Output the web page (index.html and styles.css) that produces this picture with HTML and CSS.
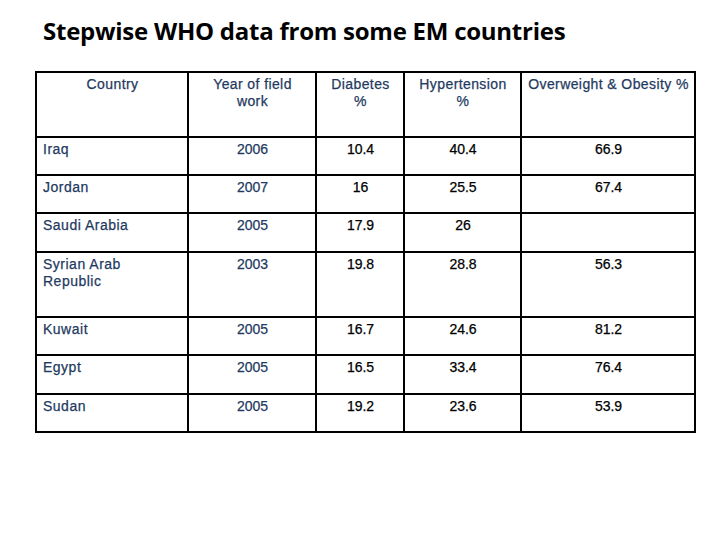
FILE: index.html
```html
<!DOCTYPE html>
<html>
<head>
<meta charset="utf-8">
<link rel="stylesheet" href="styles.css">
</head>
<body>
<div class="page">
  <h1 class="title">Stepwise WHO data from some EM countries</h1>
  <table class="data">
    <colgroup>
      <col class="c1"><col class="c2"><col class="c3"><col class="c4"><col class="c5">
    </colgroup>
    <thead>
      <tr class="head">
        <th>Country</th>
        <th>Year of field<br>work</th>
        <th>Diabetes<br>%</th>
        <th>Hypertension<br>%</th>
        <th>Overweight &amp; Obesity %</th>
      </tr>
    </thead>
    <tbody>
      <tr class="r"><td class="name">Iraq</td><td class="yr">2006</td><td class="num">10.4</td><td class="num">40.4</td><td class="num">66.9</td></tr>
      <tr class="r"><td class="name">Jordan</td><td class="yr">2007</td><td class="num">16</td><td class="num">25.5</td><td class="num">67.4</td></tr>
      <tr class="r tall1"><td class="name">Saudi Arabia</td><td class="yr">2005</td><td class="num">17.9</td><td class="num">26</td><td class="num"></td></tr>
      <tr class="r big"><td class="name">Syrian Arab<br>Republic</td><td class="yr">2003</td><td class="num">19.8</td><td class="num">28.8</td><td class="num">56.3</td></tr>
      <tr class="r"><td class="name">Kuwait</td><td class="yr">2005</td><td class="num">16.7</td><td class="num">24.6</td><td class="num">81.2</td></tr>
      <tr class="r tall1"><td class="name">Egypt</td><td class="yr">2005</td><td class="num">16.5</td><td class="num">33.4</td><td class="num">76.4</td></tr>
      <tr class="r"><td class="name">Sudan</td><td class="yr">2005</td><td class="num">19.2</td><td class="num">23.6</td><td class="num">53.9</td></tr>
    </tbody>
  </table>
</div>
</body>
</html>
```
FILE: styles.css
```css
html, body {
  margin: 0;
  padding: 0;
  background: #ffffff;
}
.page {
  width: 720px;
  height: 540px;
  padding: 13px 0 0 35px;
  box-sizing: border-box;
}
.title {
  margin: 0 0 0 8px;
  font-family: "Open Sans", "Liberation Sans", sans-serif;
  font-weight: 700;
  font-size: 24px;
  letter-spacing: -0.25px;
  line-height: 36px;
  color: #000;
}
.data {
  margin-top: 22px;
  border-collapse: collapse;
  table-layout: fixed;
  width: 661px;
  font-family: "Liberation Sans", Arial, sans-serif;
  font-size: 14px;
  line-height: 17px;
  -webkit-text-stroke: 0.25px currentColor;
}
.c1 { width: 152px; }
.c2 { width: 128px; }
.c3 { width: 88px; }
.c4 { width: 117px; }
.c5 { width: 174px; }
.data th, .data td {
  border: 2px solid #000;
  vertical-align: top;
  padding: 3px 5px 0 6px;
}
.data th {
  font-weight: normal;
  text-align: center;
  color: #1f3a5f;
  letter-spacing: 0.4px;
}
.head { height: 65px; }
.r { height: 38px; }
.r.tall1 { height: 39px; }
.r.big { height: 65px; }
.data td { padding-top: 3px; }
.name {
  text-align: left;
  color: #1f3a5f;
  letter-spacing: 0.5px;
}
.yr {
  text-align: center;
  color: #1f3a5f;
}
.num {
  text-align: center;
  color: #000;
}
```
